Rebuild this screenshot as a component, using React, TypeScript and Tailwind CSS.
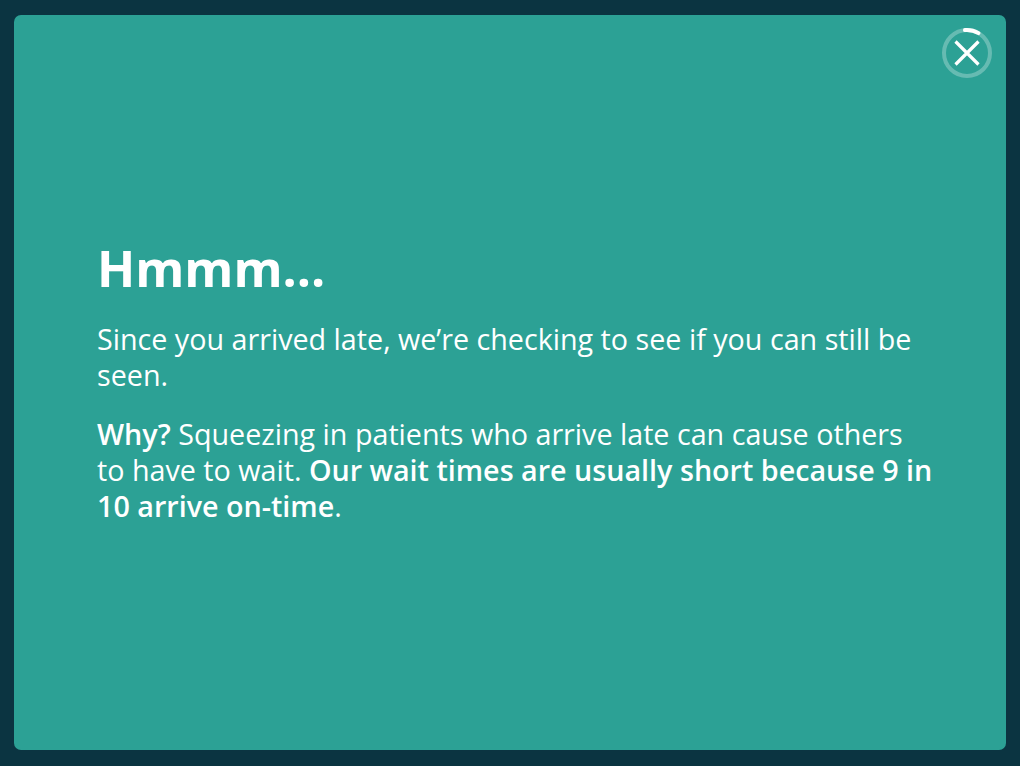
export default function App() {
  return (
    <div className="w-[1020px] h-[766px] bg-[#0b3441] p-[14px] pt-[15px] pb-[16px]" style={{ fontFamily: '"Open Sans", "Noto Sans", sans-serif' }}>
      <div className="relative h-full rounded-[7px] bg-[#2ca195] flex flex-col justify-center pl-[83px] pr-[70px] text-white">
        <button className="absolute top-[12px] right-[13px] w-[52px] h-[52px] flex items-center justify-center">
          <svg width="52" height="52" viewBox="0 0 52 52" fill="none">
            <circle cx="26" cy="26" r="23" stroke="rgba(255,255,255,0.28)" strokeWidth="4" />
            <path d="M24 3 A23 23 0 0 1 37.5 6.1" stroke="#fff" strokeWidth="4" strokeLinecap="round" />
            <path d="M14.5 14.5 L37.5 37.5 M37.5 14.5 L14.5 37.5" stroke="#fff" strokeWidth="3.2" />
          </svg>
        </button>
        <div className="mb-[3px]">
          <h1 className="text-[50px] font-bold leading-[60px] mb-[23px]">Hmmm...</h1>
          <p className="text-[28.7px] leading-[36px] mb-[23px]">
            Since you arrived late, we’re checking to see if you can still be seen.
          </p>
          <p className="text-[28.7px] leading-[36px]">
            <b className="font-semibold">Why?</b> Squeezing in patients who arrive late can cause others to have to wait.{' '}
            <b className="font-semibold">Our wait times are usually short because 9 in 10 arrive on-time</b>.
          </p>
        </div>
      </div>
    </div>
  )
}
